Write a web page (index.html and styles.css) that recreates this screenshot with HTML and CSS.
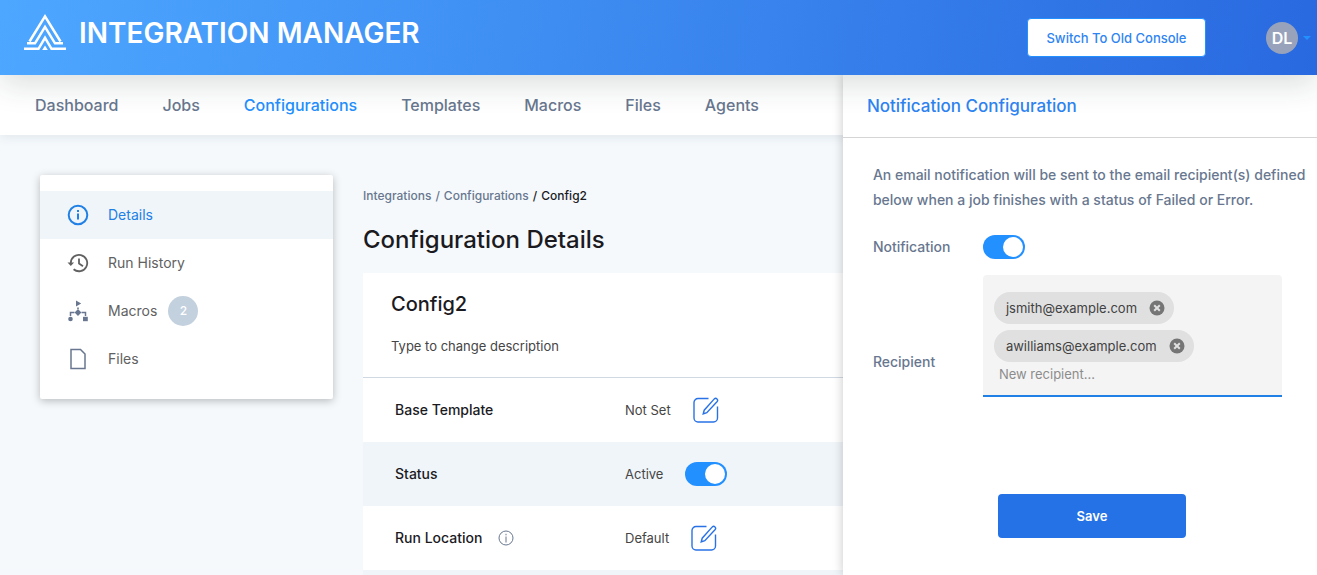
FILE: index.html
```html
<!DOCTYPE html>
<html lang="en">
<head>
<meta charset="utf-8">
<meta name="viewport" content="width=device-width, initial-scale=1">
<title>Integration Manager</title>
<link rel="stylesheet" href="styles.css">
</head>
<body>
<svg class="sprite" aria-hidden="true">
  <symbol id="edit" viewBox="0 0 26 26">
    <path d="M15.500 1.500H5a4 4 0 0 0-4 4V21a4 4 0 0 0 4 4h15.500a4 4 0 0 0 4-4V9.500"/>
    <path d="M10.200 17l1-3.800L21.300 1.900c1.900-1.500 4.300.7 2.900 2.600L13.800 15.700z"/>
  </symbol>
  <symbol id="remove" viewBox="0 0 16 16">
    <circle cx="8" cy="8" r="7.500" fill="#757575"/>
    <path d="M5.200 5.200l5.600 5.600M10.800 5.200l-5.600 5.600" fill="none" stroke="#e0e0e0" stroke-width="2"/>
  </symbol>
</svg>
<div class="app">
  <header class="topbar">
    <a class="brand" href="#">
      <svg class="brand-mark" viewBox="0 0 42 37" fill="none" stroke="#fff" stroke-width="2.500" stroke-miterlimit="8" aria-hidden="true">
        <path d="M5.500 27.500L21 2.400l15.500 25.100"/>
        <path d="M3 29.300h8L21 12.800l10 16.500h8"/>
        <path d="M0 34.800h14.500L21 23.800l6.500 11H42"/>
        <path d="M21 31.500l2.800 4.500h-5.600z" fill="#fff" stroke="none"/>
      </svg>
      <span class="brand-name">INTEGRATION MANAGER</span>
    </a>
    <div class="account">
      <button class="switch-console" type="button">Switch To Old Console</button>
      <button class="user" type="button" aria-label="Account menu">
        <span class="avatar">DL</span>
        <svg class="caret" viewBox="0 0 8 4" aria-hidden="true"><path d="M0 0h8L4 4z" fill="#2390ff"/></svg>
      </button>
    </div>
  </header>

  <nav class="mainnav">
    <a href="#">Dashboard</a>
    <a href="#">Jobs</a>
    <a href="#" class="active">Configurations</a>
    <a href="#">Templates</a>
    <a href="#">Macros</a>
    <a href="#">Files</a>
    <a href="#">Agents</a>
  </nav>

  <div class="page">
    <nav class="sidebar">
      <a href="#" class="active">
        <svg class="side-icon" viewBox="0 0 22 22" fill="none" stroke="currentColor" stroke-width="2" aria-hidden="true"><circle cx="11" cy="11" r="9.300"/><path d="M11 9.500v6M11 6v2"/></svg>
        Details
      </a>
      <a href="#">
        <svg class="side-icon" viewBox="0 0 22 22" fill="none" stroke="#616161" stroke-width="1.800" aria-hidden="true"><path d="M3.800 11a8.200 8.200 0 1 1 2.800 6.200"/><path d="M12 6.500v5l4 2.800"/><path d="M.5 10.500h6.600L3.800 14z" fill="#616161" stroke="none"/></svg>
        Run History
      </a>
      <a href="#">
        <svg class="side-icon" viewBox="0 0 22 22" fill="#68778f" aria-hidden="true"><path d="M9 .5l5.200 3L9 6.500zM10.200 7.500h1.600V9h-1.600zM11 9l3.400 3.500L11 16l-3.400-3.500z"/><circle cx="3.500" cy="19" r="2.300"/><path d="M16 16.800h4.800v4.400H16z"/><path d="M3.500 16v-3.500h4M14.500 12.500h4V16" fill="none" stroke="#68778f" stroke-width="1.500"/></svg>
        Macros
        <span class="count">2</span>
      </a>
      <a href="#">
        <svg class="side-icon" viewBox="0 0 22 22" fill="none" stroke="#68778f" stroke-width="1.500" aria-hidden="true"><path d="M4 1.500h9.500l4.500 4.600v14.400H4z"/></svg>
        Files
      </a>
    </nav>

    <main class="content">
      <div class="crumbs">
        <a href="#">Integrations</a><span>/</span><a href="#">Configurations</a><span class="here">/</span><span class="here">Config2</span>
      </div>
      <h1>Configuration Details</h1>
      <section class="card">
        <div class="card-head">
          <h2>Config2</h2>
          <p>Type to change description</p>
        </div>
        <div class="row">
          <div class="row-name">Base Template</div>
          <div class="row-value">Not Set
            <button class="edit" type="button" aria-label="Edit base template"><svg><use href="#edit"/></svg></button>
          </div>
        </div>
        <div class="row">
          <label class="row-name" for="status">Status</label>
          <div class="row-value">Active
            <input class="toggle" id="status" type="checkbox" checked>
          </div>
        </div>
        <div class="row">
          <div class="row-name">Run Location
            <svg class="hint" viewBox="0 0 16 16" fill="none" stroke="#68778f" aria-hidden="true"><circle cx="8" cy="8" r="7"/><path d="M8 6.500v6M8 3.800v1.500"/></svg>
          </div>
          <div class="row-value">Default
            <button class="edit" type="button" aria-label="Edit run location"><svg><use href="#edit"/></svg></button>
          </div>
        </div>
        <div class="row"></div>
      </section>
    </main>
  </div>

  <aside class="drawer">
    <h2 class="drawer-title">Notification Configuration</h2>
    <form class="drawer-body">
      <p class="note">An email notification will be sent to the email recipient(s) defined<br>below when a job finishes with a status of Failed or Error.</p>
      <div class="field">
        <label for="notify">Notification</label>
        <input class="toggle" id="notify" type="checkbox" checked>
      </div>
      <div class="field recipient">
        <label for="recipient">Recipient</label>
        <div class="chips">
          <span class="chip">jsmith@example.com
            <button type="button" aria-label="Remove jsmith@example.com"><svg><use href="#remove"/></svg></button></span>
          <span class="chip">awilliams@example.com
            <button type="button" aria-label="Remove awilliams@example.com"><svg><use href="#remove"/></svg></button></span>
          <input id="recipient" type="text" placeholder="New recipient...">
        </div>
      </div>
      <button class="save" type="button">Save</button>
    </form>
  </aside>
</div>
</body>
</html>
```
FILE: styles.css
```css
* { box-sizing: border-box; }

body {
  margin: 0;
  background: #f5f9fc;
  color: #616161;
  font: 14px/20px Inter, "Open Sans", sans-serif;
}

h1, h2, p { margin: 0; }
a { color: inherit; text-decoration: none; }
button { padding: 0; border: 0; background: none; font: inherit; cursor: pointer; }
.sprite { position: absolute; width: 0; height: 0; }

.app {
  position: relative;
  display: flex;
  flex-direction: column;
  height: 100vh;
  overflow: hidden;
}

.topbar {
  position: relative;
  z-index: 3;
  flex: none;
  display: flex;
  align-items: center;
  justify-content: space-between;
  height: 75px;
  padding: 0 6px 0 24px;
  background: linear-gradient(100deg, #4da7ff, #2969e0);
  box-shadow: 0 10px 30px rgba(30, 50, 50, 0.15);
}
.brand { display: flex; align-items: center; gap: 13px; padding-bottom: 10px; color: #fff; }
.brand-mark { width: 42px; height: 37px; }
.brand-name { font: 600 28px/32px Inter, sans-serif; white-space: nowrap; }
.account { display: flex; align-items: center; gap: 60px; }
.switch-console {
  width: 179px;
  height: 39px;
  border: 1px solid #2390ff;
  border-radius: 4px;
  background: #fff;
  color: #2e84f2;
  font-size: 13px;
  font-weight: 500;
}
.user { display: flex; align-items: center; gap: 5px; }
.avatar {
  width: 32px;
  border-radius: 50%;
  background: #98a3bb;
  color: #fff;
  font: 600 16px/32px Inter, sans-serif;
}
.caret { width: 8px; height: 4px; }

.mainnav {
  flex: none;
  display: flex;
  align-items: center;
  gap: 44px;
  height: 60px;
  padding: 0 35px;
  background: #fff;
  color: #68778f;
  font-size: 16px;
  font-weight: 500;
  box-shadow: 0 2px 10px rgba(50, 70, 100, 0.1);
}
.mainnav .active { color: #2390ff; }

.page { display: flex; align-items: flex-start; gap: 30px; padding: 40px; }
.sidebar {
  flex: none;
  width: 293px;
  padding: 16px 0;
  border-radius: 2px;
  background: #fff;
  box-shadow: 0 2px 8px rgba(0, 0, 0, 0.25);
}
.sidebar a { display: flex; align-items: center; height: 48px; padding-left: 27px; }
.sidebar .active { background: #f0f5fa; color: #2080e5; }
.side-icon { width: 22px; height: 22px; margin-right: 19px; }
.count {
  width: 30px;
  margin-left: 11px;
  border-radius: 50%;
  background: #c3d0de;
  color: #fff;
  font-size: 12px;
  font-weight: 500;
  line-height: 30px;
  text-align: center;
}

.content { flex: 1; min-width: 0; padding-top: 11px; color: #454545; }
.crumbs { display: flex; gap: 4px; color: #68778f; font-size: 12px; font-weight: 500; }
.crumbs .here { color: #1b1b1f; }
h1 { margin: 18px 0 17px; color: #1b1b1f; font-size: 24px; font-weight: 500; line-height: 32px; }
.card { background: #fff; font-size: 13px; }
.card-head { height: 105px; padding: 18px 28px; border-bottom: 1px solid #d0d8e3; }
.card-head h2 { margin-bottom: 18px; color: #1b1b1f; font-size: 20px; font-weight: 500; line-height: 27px; }
.row { display: flex; align-items: center; height: 64px; padding: 0 32px; }
.row:nth-child(odd) { background: #f0f5fa; }
.row-name { display: flex; align-items: center; gap: 16px; width: 230px; color: #1b1b1f; font-size: 14px; font-weight: 500; }
.row-value { display: flex; align-items: center; gap: 22px; }
.hint { width: 16px; height: 16px; }
.edit svg { display: block; width: 26px; height: 26px; fill: none; stroke: #2872e6; stroke-width: 1.4; }

.toggle {
  appearance: none;
  position: relative;
  width: 42px;
  height: 24px;
  margin: 0;
  border-radius: 12px;
  background: #9aa5b5;
}
.toggle::before {
  content: "";
  position: absolute;
  top: 2px;
  left: 2px;
  width: 20px;
  height: 20px;
  border-radius: 50%;
  background: #fff;
}
.toggle:checked { background: #2390ff; }
.toggle:checked::before { left: 20px; }

.drawer {
  position: absolute;
  z-index: 2;
  top: 75px;
  right: 0;
  bottom: 0;
  width: 36%;
  background: #fff;
  color: #68778f;
  font-size: 14px;
  font-weight: 500;
  box-shadow: 0 0 10px rgba(0, 0, 0, 0.22);
}
.drawer-title {
  padding: 19px 24px;
  border-bottom: 1px solid #d5d5d5;
  color: #2e84f2;
  font-size: 17px;
  font-weight: 500;
  line-height: 24px;
}
.drawer-body { display: flex; flex-direction: column; padding: 24px 0 0 30px; }
.note { margin-bottom: 23px; line-height: 25px; white-space: nowrap; }
.field { display: flex; align-items: center; }
.field > label { width: 110px; }
.recipient { margin: 16px 35px 97px 0; }
.recipient > label { padding-top: 52px; }
.chips {
  flex: 1;
  display: flex;
  flex-direction: column;
  align-items: flex-start;
  gap: 6px;
  height: 122px;
  padding: 17px 11px 0;
  border-bottom: 2px solid #2080e5;
  border-radius: 4px 4px 0 0;
  background: #f4f4f4;
  font-size: 13px;
}
.chip {
  display: flex;
  align-items: center;
  gap: 12px;
  height: 32px;
  padding: 0 9px 0 12px;
  border-radius: 16px;
  background: #e0e0e0;
  color: #424242;
  font-weight: 400;
}
.chip svg { display: block; width: 16px; height: 16px; }
.chips input {
  width: 100%;
  height: 20px;
  margin-top: -4px;
  padding: 0 5px;
  border: 0;
  outline: 0;
  background: none;
  font: inherit;
  font-weight: 400;
}
.chips input::placeholder { color: #8c8c8c; }
.save {
  align-self: center;
  width: 188px;
  height: 44px;
  margin-right: 6px;
  border-radius: 4px;
  background: #2472e6;
  color: #fff;
  font-size: 13px;
  font-weight: 600;
}
```
